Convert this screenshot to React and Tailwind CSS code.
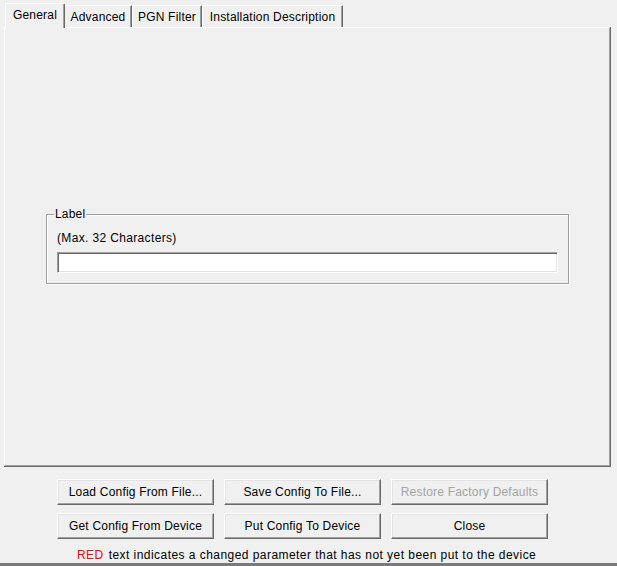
export default function App() {
  const btn =
    "w-[157px] h-[26px] border-t border-l border-white border-r border-b border-r-[#696969] border-b-[#696969] bg-[#f0f0f0] shadow-[inset_-1px_-1px_0_#a0a0a0,inset_1px_1px_0_#e3e3e3] flex items-center justify-center leading-[14px] tracking-[0.2px]";
  return (
    <div className="w-[617px] h-[566px] bg-[#f0f0f0] flex flex-col font-['Liberation_Sans',Arial,sans-serif] text-[12px] text-black overflow-hidden">
      {/* Tabs */}
      <div className="h-[27px] flex items-end pl-[5px] relative z-10 tracking-[0.2px]">
        <div className="w-[60px] h-[25px] -mb-px bg-[#f0f0f0] border-t border-l border-white border-r border-r-[#696969] rounded-tr-[2px] shadow-[inset_-1px_0_0_#a0a0a0] flex justify-center pt-[4px] leading-[14px]">
          General
        </div>
        <div className="w-[67px] h-[22px] bg-[#f0f0f0] border-t border-white border-r border-r-[#696969] shadow-[inset_-1px_0_0_#a0a0a0] flex justify-center pt-[4px] leading-[14px]">
          Advanced
        </div>
        <div className="w-[70px] h-[22px] bg-[#f0f0f0] border-t border-l border-white border-r border-r-[#696969] shadow-[inset_-1px_0_0_#a0a0a0] flex justify-center pt-[4px] leading-[14px]">
          PGN Filter
        </div>
        <div className="w-[141px] h-[22px] bg-[#f0f0f0] border-t border-l border-white border-r border-r-[#696969] shadow-[inset_-1px_0_0_#a0a0a0] flex justify-center pt-[4px] leading-[14px]">
          Installation Description
        </div>
      </div>

      {/* Panel */}
      <div className="ml-[4px] w-[607px] h-[440px] border-r border-b border-[#696969] flex">
        <div className="flex-1 border-t border-l border-white border-r border-b border-r-[#a0a0a0] border-b-[#a0a0a0] pl-[41px] pt-[179px]">
          <fieldset className="w-[523px] border border-[#a0a0a0] shadow-[inset_1px_1px_0_#fff,1px_1px_0_#fff] px-[10px] pb-[10px]">
            <legend className="-ml-[3px] px-[1px] leading-[14px] tracking-[0.2px]">Label</legend>
            <div className="mt-[10px] leading-[14px] tracking-[0.35px]">(Max. 32 Characters)</div>
            <div className="mt-[7px] h-[21px] w-[501px] bg-white border-t border-l border-[#a0a0a0] border-r border-b border-r-white border-b-white shadow-[inset_1px_1px_0_#696969,inset_-1px_-1px_0_#e3e3e3]"></div>
          </fieldset>
        </div>
      </div>

      {/* Buttons */}
      <div className="mt-[12px] pl-[57px] flex flex-col gap-[8px]">
        <div className="flex gap-[10px]">
          <div className={btn}>Load Config From File...</div>
          <div className={btn}>Save Config To File...</div>
          <div className={btn + " text-[#a3a3a3]"}>Restore Factory Defaults</div>
        </div>
        <div className="flex gap-[10px]">
          <div className={btn}>Get Config From Device</div>
          <div className={btn}>Put Config To Device</div>
          <div className={btn}>Close</div>
        </div>
      </div>

      <div className="mt-[9px] pl-[77px] leading-[14px] flex tracking-[0.45px]">
        <span className="text-[#ff0000]">RED</span>
        <span className="ml-[5px]">text indicates a changed parameter that has not yet been put to the device</span>
      </div>
      <div className="mt-auto h-[3px] bg-[#7a7a7a]"></div>
    </div>
  );
}
